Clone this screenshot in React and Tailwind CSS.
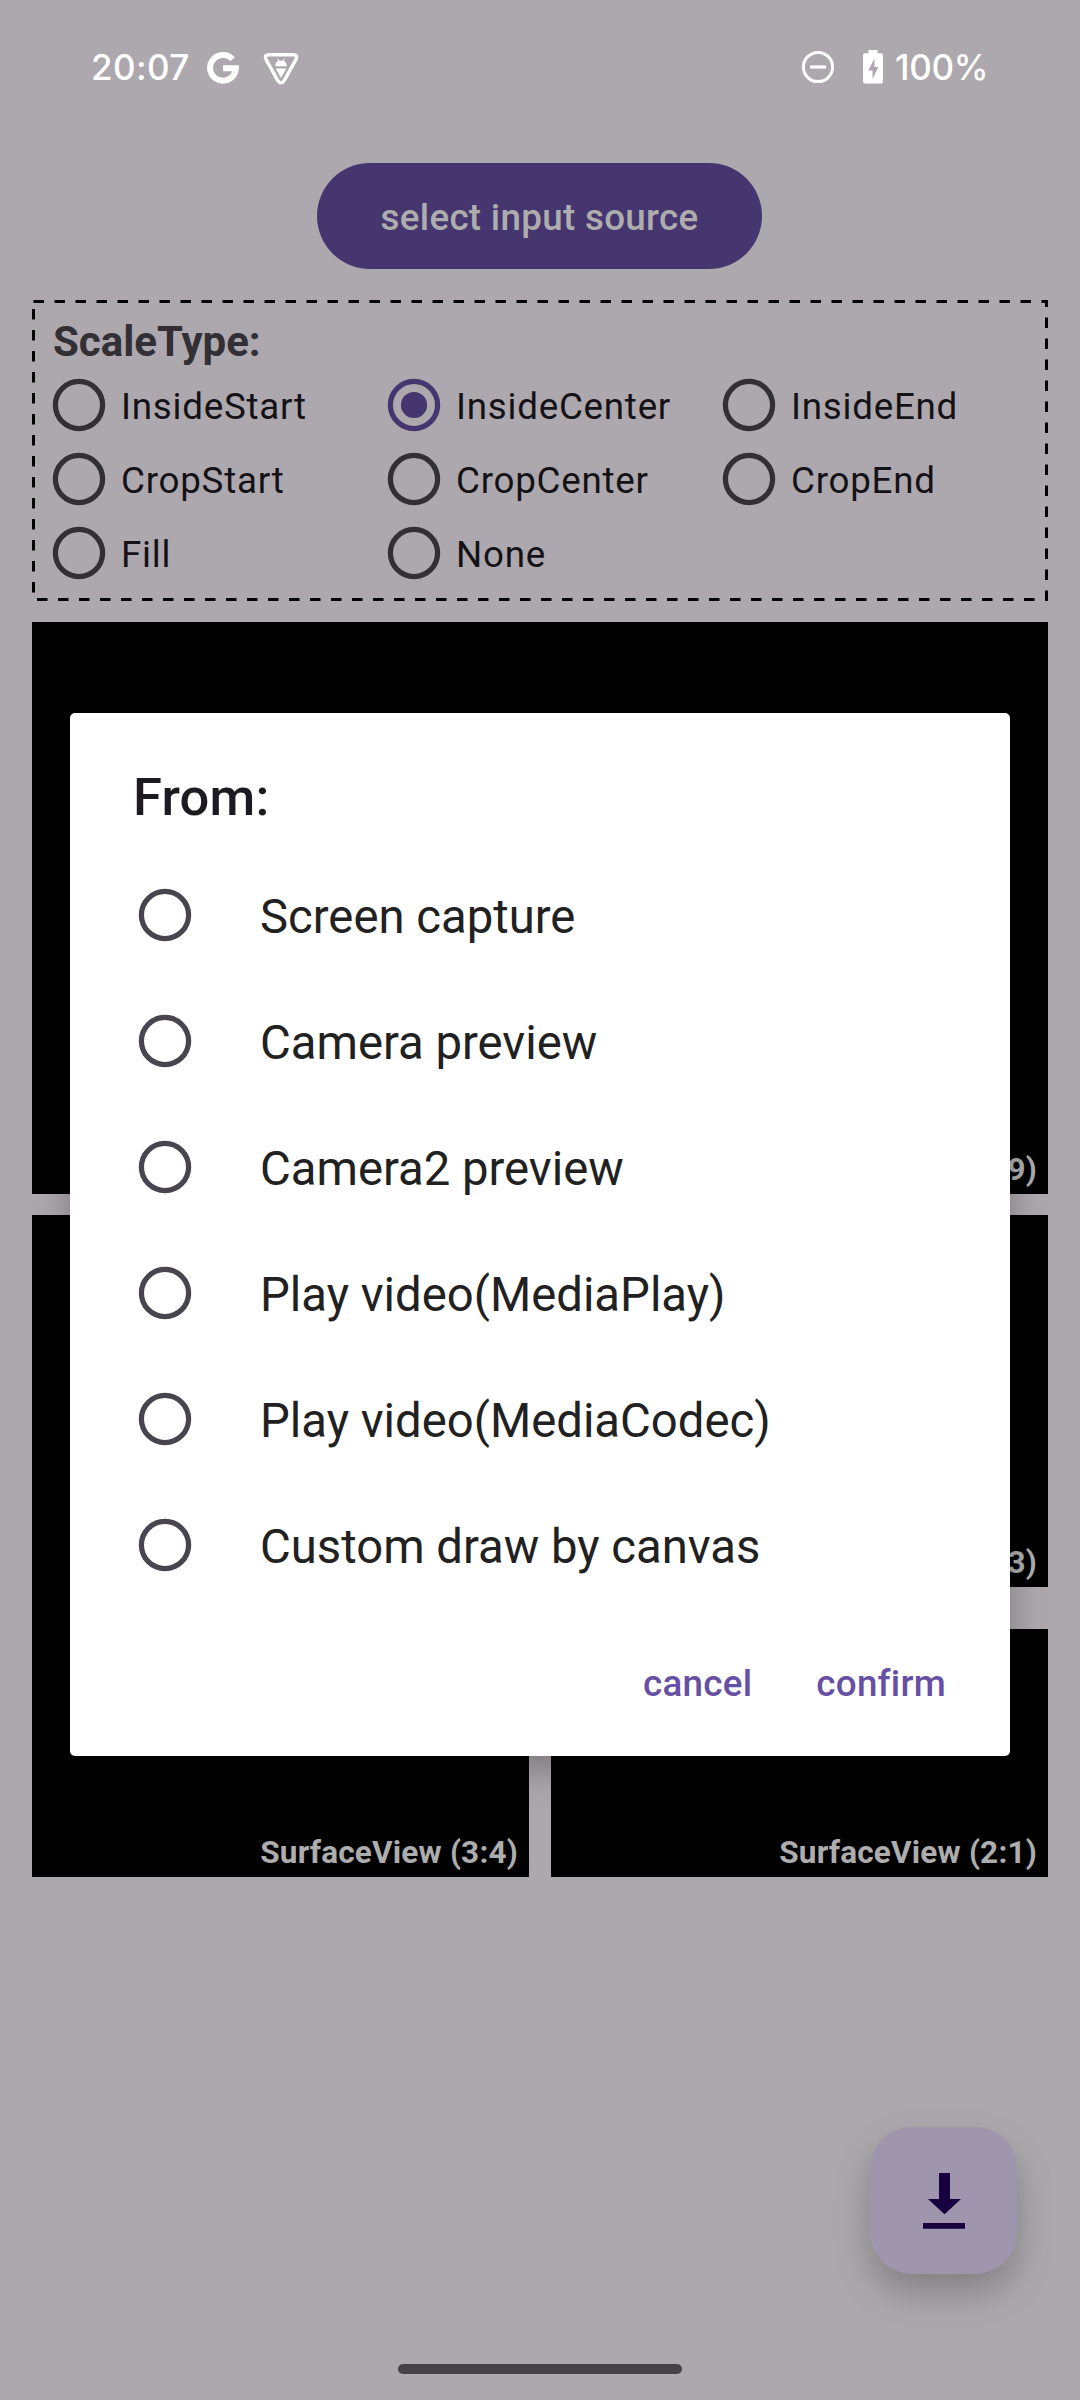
const scaleTypes = [
  "InsideStart", "InsideCenter", "InsideEnd",
  "CropStart", "CropCenter", "CropEnd",
  "Fill", "None",
];

const sources = [
  "Screen capture",
  "Camera preview",
  "Camera2 preview",
  "Play video(MediaPlay)",
  "Play video(MediaCodec)",
  "Custom draw by canvas",
];

function Radio({ checked, className }) {
  return (
    <svg viewBox="0 0 54 54" className={`h-[54px] w-[54px] shrink-0 ${className}`}>
      <circle cx="27" cy="27" r="23.6" fill="none" stroke="currentColor" strokeWidth="5.25" />
      {checked && <circle cx="27" cy="27" r="13.1" fill="currentColor" />}
    </svg>
  );
}

function StatusBar() {
  return (
    <header className="flex h-[163px] items-start text-white">
      <div className="flex h-[134px] w-full items-center pl-[91px] pr-[91px] font-['Inter'] text-[35px] font-medium">
        <span className="w-[100px] whitespace-nowrap tracking-[0.4px]">20:07</span>
        <svg viewBox="0 0 36 36" className="ml-[14px] mt-[2px] h-[36px] w-[36px]">
          <path
            d="M27.6 9.2A12.9 12.9 0 1 0 30.9 18.2H18"
            fill="none" stroke="currentColor" strokeWidth="6"
          />
        </svg>
        <svg viewBox="0 0 38 36" className="ml-[21px] mt-[2px] h-[36px] w-[38px]">
          <path
            d="M7 4.7h24q5.2 0 3 4.7L22.2 30.5q-3.2 4.600-6.400 0L4 9.400q-2.200-4.700 3-4.700z"
            fill="none" stroke="currentColor" strokeWidth="3.4"
          />
          <path d="M13.300 16.200q.300-4.700 3.200-5.200l-1.300-2 .8-.5 1.700 2.300h2.600L22 8.500l.8.5-1.300 2q2.900.5 3.200 5.200zM13.800 18.500h10.400L19.800 26.700q-.8 1.200-1.600 0z" fill="currentColor" />
        </svg>
        <div className="grow" />
        <svg viewBox="0 0 34 34" className="h-[34px] w-[34px]">
          <circle cx="17" cy="17" r="14.600" fill="none" stroke="currentColor" strokeWidth="3" />
          <path d="M9 17h16" stroke="currentColor" strokeWidth="3.200" />
        </svg>
        <svg viewBox="0 0 20 34" className="ml-[28px] h-[34px] w-[20px]">
          <path
            fillRule="evenodd"
            d="M5.500 0h9v3.200H18q2 0 2 2v26.300q0 2-2 2H2q-2 0-2-2V5.200q0-2 2-2h3.500zM11.500 8.500 5.300 20.500h4.200v8.500l5.800-12h-3.800z"
            fill="currentColor"
          />
        </svg>
        <span className="ml-[12px] w-[94px] whitespace-nowrap tracking-[-0.3px]">100%</span>
      </div>
    </header>
  );
}

function Surface({ label, className }) {
  return (
    <div className={`flex items-end justify-end bg-black pb-[6px] pr-[11px] text-[31.5px] font-bold leading-[37px] tracking-[0.2px] text-[#adadad] ${className}`}>
      {label}
    </div>
  );
}

function ScaleTypePanel() {
  return (
    <section className="relative mt-[31px] h-[301px] pl-[20px] pt-[18px]">
      <svg className="absolute inset-0 h-full w-full" viewBox="0 0 1016 301">
        <rect
          x="1.500" y="1.500" width="1013" height="298"
          fill="none" stroke="#000" strokeWidth="3" strokeDasharray="10.500 10.500"
        />
      </svg>
      <h2 className="h-[50px] pl-px text-[42px] font-bold leading-[48px] text-[#322f35]">ScaleType:</h2>
      <div className="grid grid-cols-[335px_335px_326px] auto-rows-[74px]">
        {scaleTypes.map((name) => (
          <label key={name} className="flex items-center text-[36.75px] tracking-[0.75px] text-[#141216]">
            <Radio
              checked={name === "InsideCenter"}
              className={name === "InsideCenter" ? "text-[#46366f]" : "text-[#322f35]"}
            />
            <span className="pl-[15px] pt-[3px]">{name}</span>
          </label>
        ))}
      </div>
    </section>
  );
}

function SourceDialog() {
  return (
    <div
      role="dialog"
      className="absolute left-[70px] top-[713px] flex h-[1043px] w-[940px] flex-col rounded-[5px] bg-white shadow-[0_14px_36px_rgba(0,0,0,0.28)]"
    >
      <h1 className="pl-[63px] pt-[53px] text-[52.5px] font-medium leading-[62px] tracking-[0.2px] text-[#1d1b20]">From:</h1>
      <div className="mt-[24px] flex flex-col">
        {sources.map((name) => (
          <label key={name} className="flex h-[126px] items-center pl-[68px] text-[47.25px] text-[#212121]">
            <Radio className="text-[#49454f]" />
            <span className="pl-[68px] pt-[4px]">{name}</span>
          </label>
        ))}
      </div>
      <div className="mt-[54px] flex justify-end gap-[64px] pr-[64px] text-[36.75px] font-medium leading-[44px] tracking-[0.26px] text-[#6750a4]">
        <button>cancel</button>
        <button>confirm</button>
      </div>
    </div>
  );
}

export default function App() {
  return (
    <div className="relative h-[2400px] w-[1080px] overflow-hidden bg-[#ada8ad] font-['Roboto',sans-serif]">
      <StatusBar />
      <main className="px-[32px]">
        <button className="ml-[285px] flex h-[106px] w-[445px] items-center justify-center rounded-[53px] bg-[#46366f] pt-[3px] text-[36.75px] font-medium tracking-[0.3px] text-[#adadad]">
          select input source
        </button>
        <ScaleTypePanel />
        <Surface label="SurfaceView (16:9)" className="mt-[21px] h-[572px]" />
        <div className="mt-[21px] grid grid-cols-2 gap-[22px]">
          <Surface label="SurfaceView (3:4)" className="h-[662px]" />
          <div className="flex flex-col justify-between">
            <Surface label="SurfaceView (4:3)" className="h-[372px]" />
            <Surface label="SurfaceView (2:1)" className="h-[248px]" />
          </div>
        </div>
      </main>

      <button className="absolute left-[870px] top-[2127px] flex h-[147px] w-[147px] items-center justify-center rounded-[42px] bg-[#9f96ad] shadow-[0_18px_36px_rgba(0,0,0,0.24)]">
        <svg viewBox="0 0 63 63" className="h-[63px] w-[63px] text-[#16003f]">
          <path d="M27 4h11v26h11L32.500 45.300 16 30h11zM11 54h42v5.700H11z" fill="currentColor" />
        </svg>
      </button>

      <SourceDialog />

      <div className="absolute left-[398px] top-[2364px] h-[10px] w-[284px] rounded-full bg-[#464346]" />
    </div>
  );
}
